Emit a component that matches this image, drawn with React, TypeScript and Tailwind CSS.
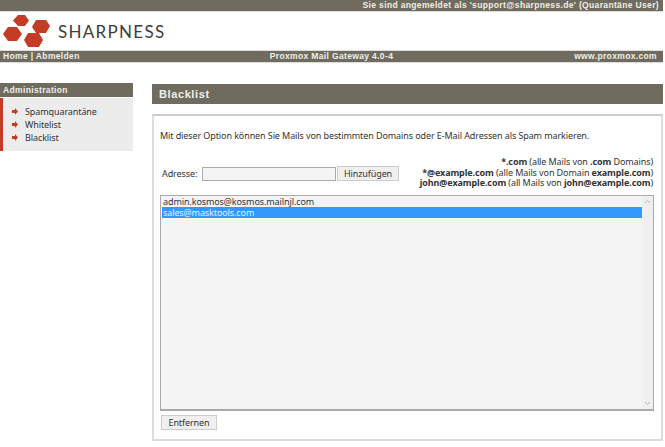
const bar = "bg-[#6f6b5f] text-[#f0efe8] font-bold text-[8.5px] tracking-[0.35px]";
const sans = "font-['Liberation_Sans',sans-serif]";

function Logo() {
  return (
    <svg width="47" height="32" viewBox="0 0 47 32" className="shrink-0">
      <g fill="#c33c26">
        <polygon points="10,5.5 15,0 22,0 26,5.5 22,11 15,11" />
        <polygon points="29,12 33,5 43,5 47,11 43,18 33,18" />
        <polygon points="0,19 5,12 14,12 19,19 14,26 5,26" />
        <polygon points="21,25 25,18 36,18 40,25 36,32 25,32" />
      </g>
    </svg>
  );
}

function MenuItem({ label }: { label: string }) {
  return (
    <div className="flex items-center h-[13px] pl-[9px]">
      <svg width="6" height="7" viewBox="0 0 6 7" className="mr-[7px]">
        <path d="M0 2h3V0l3 3.5L3 7V5H0z" fill="#c33c26" />
      </svg>
      <span>{label}</span>
    </div>
  );
}

export default function App() {
  return (
    <div className="w-[665px] h-[447px] overflow-hidden bg-white text-[#333] text-[9px] tracking-[-0.1px] font-['Noto_Sans',sans-serif]">
      <div className="w-[663px]">
        {/* Top bar */}
        <div className={`${bar} ${sans} h-[11px] leading-[11px] text-right pr-1`}>
          Sie sind angemeldet als 'support@sharpness.de' (Quarantäne User)
        </div>

        {/* Logo */}
        <div className="h-[39px] flex items-start pl-[3px] pt-[3px] border-t border-[#ddd]">
          <Logo />
          <span className="font-['Lato',sans-serif] ml-[8px] mt-[7px] text-[17px] leading-[20px] tracking-[1.3px] text-[#3c3c3e]">SHARPNESS</span>
        </div>

        {/* Nav bar */}
        <div className={`${bar} ${sans} h-[11px] leading-[11px] grid grid-cols-3 px-[3px] border-y border-[#ddd] box-content`}>
          <span>Home | Abmelden</span>
          <span className="text-center whitespace-nowrap">Proxmox Mail Gateway 4.0-4</span>
          <span className="text-right pr-[3px]">www.proxmox.com</span>
        </div>

        <div className="flex mt-[20px]">
          {/* Sidebar */}
          <div className="w-[133px] shrink-0">
            <div className={`${bar} ${sans} h-[14px] leading-[14px] pl-[3px]`}>Administration</div>
            <div className="mt-px h-[53px] bg-[#ececec] border-l-[3px] border-[#c33c26] pt-[7px]">
              <MenuItem label="Spamquarantäne" />
              <MenuItem label="Whitelist" />
              <MenuItem label="Blacklist" />
            </div>
          </div>

          {/* Content */}
          <div className="ml-[19px] w-[511px] shrink-0 mt-px">
            <div className={`${sans} h-[20px] leading-[20px] bg-[#6f6b5f] text-[#f0efe8] font-bold text-[11px] tracking-[0.6px] pl-[7px]`}>
              Blacklist
            </div>
            <div className="mt-[10px] h-[327px] border-2 border-[#dcdcdc] border-t-[#ccc] pl-[6px] pr-[8px] pt-[14px]">
              <p className="leading-[12px] whitespace-nowrap">
                Mit dieser Option können Sie Mails von bestimmten Domains oder E-Mail Adressen als Spam markieren.
              </p>

              <div className="flex justify-between mt-[15px]">
                <div className="flex items-center self-start mt-[9px] pl-[2px]">
                  <span className="w-[37px]">Adresse:</span>
                  <input className="ml-[3px] w-[134px] h-[14px] bg-[#f4f4f4] border border-[#aaa]" />
                  <button className="ml-px w-[62px] h-[15px] bg-[#efefef] border border-[#ccc] text-[9px] tracking-[-0.1px] text-[#333] leading-none">
                    Hinzufügen
                  </button>
                </div>
                <div className="text-right leading-[10.5px] whitespace-nowrap">
                  <div><b>*.com</b> (alle Mails von <b>.com</b> Domains)</div>
                  <div><b>*@example.com</b> (alle Mails von Domain <b>example.com</b>)</div>
                  <div><b>john@example.com</b> (all Mails von <b>john@example.com</b>)</div>
                </div>
              </div>

              {/* Address list */}
              <div className="mt-[6px] -mr-px h-[216px] flex bg-[#f4f4f4] border border-[#aaa] border-b-2 pl-px">
                <div className="flex-1 leading-[11px]">
                  <div className="pl-px">admin.kosmos@kosmos.mailnjl.com</div>
                  <div className="pl-px bg-[#3399ff] text-[#e8f0f8]">sales@masktools.com</div>
                </div>
                <div className="w-[11px] bg-[#efefef] flex flex-col justify-between items-center text-[#b5b5b5] py-[3px]">
                  <svg width="7" height="5" viewBox="0 0 7 5"><path d="M1 4l2.5-2.5L6 4" fill="none" stroke="currentColor" /></svg>
                  <svg width="7" height="5" viewBox="0 0 7 5"><path d="M1 1l2.5 2.5L6 1" fill="none" stroke="currentColor" /></svg>
                </div>
              </div>

              <button className="mt-[4px] ml-px w-[56px] h-[15px] bg-[#efefef] border border-[#ccc] text-[9px] tracking-[-0.1px] text-[#333] leading-none">
                Entfernen
              </button>
            </div>
          </div>
        </div>
      </div>
    </div>
  );
}
